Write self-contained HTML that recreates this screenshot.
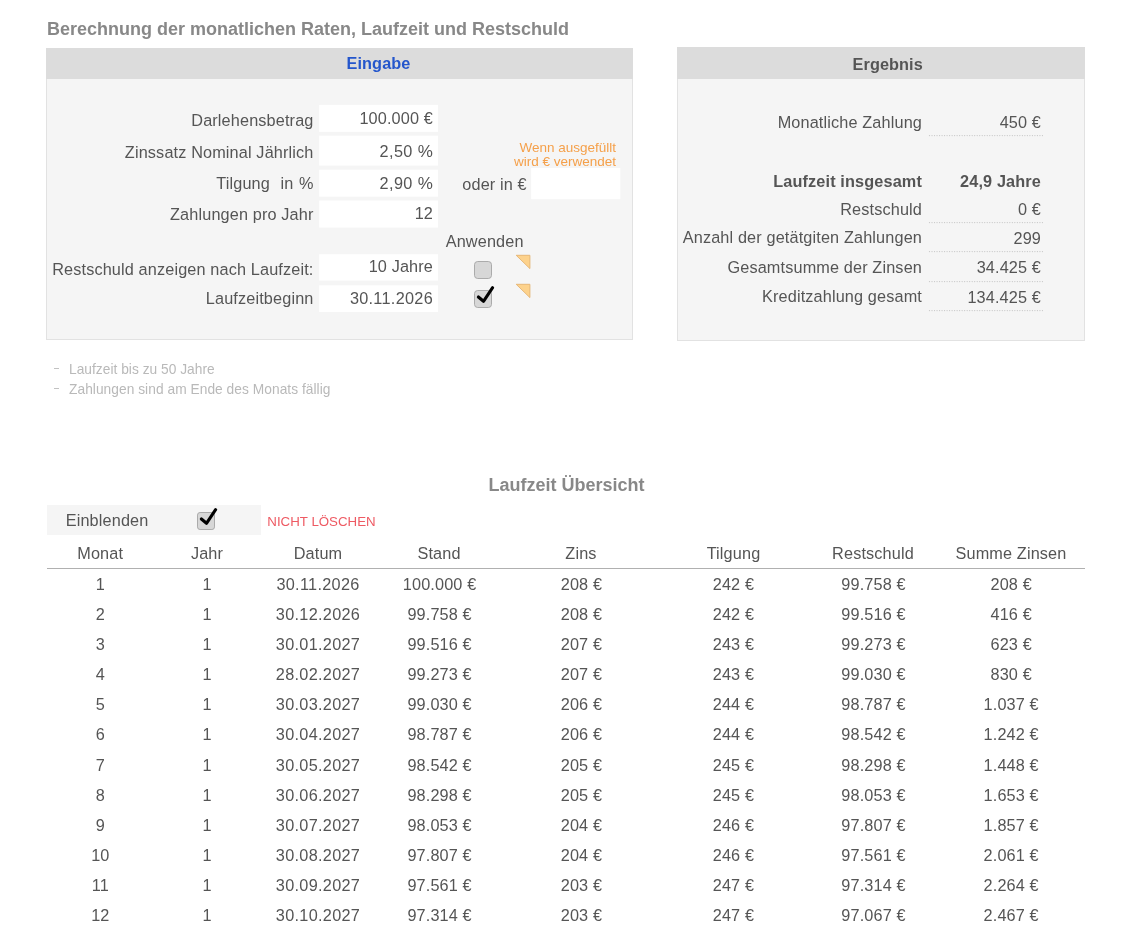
<!DOCTYPE html>
<html lang="de"><head><meta charset="utf-8"><title>Berechnung der monatlichen Raten</title>
<style>
html,body{margin:0;padding:0;background:#fff;}
body{width:1147px;height:934px;position:relative;overflow:hidden;font-family:"Liberation Sans",sans-serif;color:#555;font-size:16.25px;letter-spacing:0.14px;}
#wrap{position:absolute;left:0;top:0;width:1147px;height:934px;will-change:transform;}
.t{position:absolute;white-space:nowrap;line-height:20px;height:20px;}
.box{position:absolute;}
</style></head><body><div id="wrap">

<div class="t" style="top:19px;left:47px;font-size:18px;font-weight:bold;color:#888;letter-spacing:0px;">Berechnung der monatlichen Raten, Laufzeit und Restschuld</div>
<div class="box" style="left:46px;top:48px;width:587px;height:292px;background:#f5f5f5;box-sizing:border-box;border:1px solid #e2e2e2;"></div>
<div class="box" style="left:46px;top:48px;width:587px;height:31px;background:#dcdcdc;"></div>
<div class="t" style="top:53px;left:228.5px;width:300px;text-align:center;font-weight:bold;color:#2456cc;letter-spacing:0.1px;">Eingabe</div>
<svg class="box" style="left:300px;top:100px;" width="330" height="220" viewBox="300 100 330 220"><rect x="319.1" y="104.9" width="118.9" height="27.00" fill="#fff"/><rect x="319.1" y="135.65" width="118.9" height="29.95" fill="#fff"/><rect x="319.1" y="169.7" width="118.9" height="26.95" fill="#fff"/><rect x="319.1" y="200.5" width="118.9" height="27.10" fill="#fff"/><rect x="319.1" y="254.2" width="118.9" height="26.40" fill="#fff"/><rect x="319.1" y="285.3" width="118.9" height="26.70" fill="#fff"/><rect x="531.1" y="168" width="89.2" height="31.2" fill="#fff"/></svg>
<div class="t" style="top:110px;left:13.5px;width:300px;text-align:right;">Darlehensbetrag</div>
<div class="t" style="top:142px;left:13.5px;width:300px;text-align:right;">Zinssatz Nominal Jährlich</div>
<div class="t" style="top:173px;left:13.5px;width:300px;text-align:right;"><span style="word-spacing:0.7px">Tilgung&nbsp; in %</span></div>
<div class="t" style="top:204px;left:13.5px;width:300px;text-align:right;">Zahlungen pro Jahr</div>
<div class="t" style="top:259px;left:13.5px;width:300px;text-align:right;">Restschuld anzeigen nach Laufzeit:</div>
<div class="t" style="top:288px;left:13.5px;width:300px;text-align:right;">Laufzeitbeginn</div>
<div class="t" style="top:108px;left:133px;width:300px;text-align:right;">100.000 €</div>
<div class="t" style="top:141px;left:133px;width:300px;text-align:right;"><span style="letter-spacing:0.4px">2,50 </span><span style="font-size:17px">%</span></div>
<div class="t" style="top:173px;left:133px;width:300px;text-align:right;"><span style="letter-spacing:0.4px">2,90 </span><span style="font-size:17px">%</span></div>
<div class="t" style="top:203px;left:133px;width:300px;text-align:right;">12</div>
<div class="t" style="top:256px;left:133px;width:300px;text-align:right;">10 Jahre</div>
<div class="t" style="top:288px;left:133px;width:300px;text-align:right;"><span style="letter-spacing:0.3px">30.11.2026</span></div>
<div class="t" style="top:174px;left:462.3px;">oder in €</div>
<div class="t" style="top:231px;left:445.7px;">Anwenden</div>
<div class="t" style="left:466px;width:150px;text-align:right;top:140.5px;font-size:13.5px;line-height:14px;height:28px;color:#f5a04a;letter-spacing:0;">Wenn ausgefüllt<br>wird € verwendet</div>
<svg class="box" style="left:472.1px;top:255.10000000000002px;" width="26" height="28" viewBox="-2 -6 26 28"><rect x="0.5" y="0.5" width="17" height="17" rx="3.2" fill="#d7d7d7" stroke="#ababab"/></svg>
<svg class="box" style="left:472.1px;top:284px;" width="26" height="28" viewBox="-2 -6 26 28"><rect x="0.5" y="0.5" width="17" height="17" rx="3.2" fill="#d7d7d7" stroke="#ababab"/><path d="M4.4 6.95 L9.5 11.3 L18.6 -2.3" fill="none" stroke="#000" stroke-width="3.1" stroke-linecap="round" stroke-linejoin="round"/></svg>
<svg class="box" style="left:514px;top:253.2px;" width="18" height="18" viewBox="-2 -2 18 18"><path d="M0.2 0.3 L13.9 0.3 L13.9 13.6 Z" fill="#fdd28c" stroke="#e4b370" stroke-width="0.9"/></svg>
<svg class="box" style="left:514px;top:282.1px;" width="18" height="18" viewBox="-2 -2 18 18"><path d="M0.2 0.3 L13.9 0.3 L13.9 13.6 Z" fill="#fdd28c" stroke="#e4b370" stroke-width="0.9"/></svg>
<div class="box" style="left:53.5px;top:368px;width:5.4px;height:1.2px;background:#c2c2c2;"></div>
<div class="t" style="top:359px;line-height:21px;height:21px;left:69px;font-size:13.75px;color:#b9b9b9;letter-spacing:0.02px;">Laufzeit bis zu 50 Jahre</div>
<div class="box" style="left:53.5px;top:388px;width:5.4px;height:1.2px;background:#c2c2c2;"></div>
<div class="t" style="top:379px;line-height:21px;height:21px;left:69px;font-size:13.75px;color:#b9b9b9;letter-spacing:0.04px;">Zahlungen sind am Ende des Monats fällig</div>
<div class="box" style="left:677px;top:47px;width:408px;height:293.5px;background:#f5f5f5;box-sizing:border-box;border:1px solid #e2e2e2;"></div>
<div class="box" style="left:677px;top:47px;width:408px;height:32px;background:#dcdcdc;"></div>
<div class="t" style="top:54px;left:737.7px;width:300px;text-align:center;font-weight:bold;letter-spacing:0.1px;">Ergebnis</div>
<div class="t" style="top:112px;left:622px;width:300px;text-align:right;">Monatliche Zahlung</div>
<div class="t" style="top:112px;left:741px;width:300px;text-align:right;">450 €</div>
<svg class="box" style="left:928px;top:134px;" width="118" height="3"><line x1="1.5" y1="1.5" x2="116.5" y2="1.5" stroke="#c6c6c6" stroke-width="1.25" stroke-linecap="round" stroke-dasharray="0.01 2.5"/></svg>
<div class="t" style="top:171px;left:622px;width:300px;text-align:right;font-weight:bold;">Laufzeit insgesamt</div>
<div class="t" style="top:171px;left:741px;width:300px;text-align:right;font-weight:bold;">24,9 Jahre</div>
<div class="t" style="top:199px;left:622px;width:300px;text-align:right;">Restschuld</div>
<div class="t" style="top:199px;left:741px;width:300px;text-align:right;">0 €</div>
<svg class="box" style="left:928px;top:221px;" width="118" height="3"><line x1="1.5" y1="1.5" x2="116.5" y2="1.5" stroke="#c6c6c6" stroke-width="1.25" stroke-linecap="round" stroke-dasharray="0.01 2.5"/></svg>
<div class="t" style="top:227px;left:622px;width:300px;text-align:right;">Anzahl der getätgiten Zahlungen</div>
<div class="t" style="top:228px;left:741px;width:300px;text-align:right;">299</div>
<svg class="box" style="left:928px;top:250px;" width="118" height="3"><line x1="1.5" y1="1.5" x2="116.5" y2="1.5" stroke="#c6c6c6" stroke-width="1.25" stroke-linecap="round" stroke-dasharray="0.01 2.5"/></svg>
<div class="t" style="top:257px;left:622px;width:300px;text-align:right;">Gesamtsumme der Zinsen</div>
<div class="t" style="top:257px;left:741px;width:300px;text-align:right;">34.425 €</div>
<svg class="box" style="left:928px;top:280px;" width="118" height="3"><line x1="1.5" y1="1.5" x2="116.5" y2="1.5" stroke="#c6c6c6" stroke-width="1.25" stroke-linecap="round" stroke-dasharray="0.01 2.5"/></svg>
<div class="t" style="top:286px;left:622px;width:300px;text-align:right;">Kreditzahlung gesamt</div>
<div class="t" style="top:287px;left:741px;width:300px;text-align:right;">134.425 €</div>
<svg class="box" style="left:928px;top:309px;" width="118" height="3"><line x1="1.5" y1="1.5" x2="116.5" y2="1.5" stroke="#c6c6c6" stroke-width="1.25" stroke-linecap="round" stroke-dasharray="0.01 2.5"/></svg>
<div class="t" style="top:475px;left:416.5px;width:300px;text-align:center;font-size:18px;font-weight:bold;color:#888;letter-spacing:0px;">Laufzeit Übersicht</div>
<div class="box" style="left:47px;top:505px;width:214px;height:30px;background:#f5f5f5;"></div>
<div class="t" style="top:510px;left:65.7px;">Einblenden</div>
<svg class="box" style="left:195.1px;top:506px;" width="26" height="28" viewBox="-2 -6 26 28"><rect x="0.5" y="0.5" width="17" height="17" rx="2.6" fill="#d7d7d7" stroke="#ababab"/><path d="M4.4 6.95 L9.5 11.3 L18.6 -2.3" fill="none" stroke="#000" stroke-width="3.1" stroke-linecap="round" stroke-linejoin="round"/></svg>
<div class="t" style="top:511px;line-height:21px;height:21px;left:267.3px;font-size:13.3px;color:#ee5a63;letter-spacing:0px;">NICHT LÖSCHEN</div>
<div class="t" style="top:543px;left:-49.8px;width:300px;text-align:center;">Monat</div>
<div class="t" style="top:543px;left:57.0px;width:300px;text-align:center;">Jahr</div>
<div class="t" style="top:543px;left:168.0px;width:300px;text-align:center;">Datum</div>
<div class="t" style="top:543px;left:289.0px;width:300px;text-align:center;">Stand</div>
<div class="t" style="top:543px;left:431.0px;width:300px;text-align:center;">Zins</div>
<div class="t" style="top:543px;left:583.5px;width:300px;text-align:center;">Tilgung</div>
<div class="t" style="top:543px;left:723.0px;width:300px;text-align:center;">Restschuld</div>
<div class="t" style="top:543px;left:861.0px;width:300px;text-align:center;">Summe Zinsen</div>
<div class="box" style="left:47px;top:568px;width:1038px;height:1px;background:#b0b0b0;"></div>
<div class="t" style="top:574px;left:-49.7px;width:300px;text-align:center;">1</div>
<div class="t" style="top:574px;left:57.19999999999999px;width:300px;text-align:center;">1</div>
<div class="t" style="top:574px;left:168.0px;width:300px;text-align:center;"><span style="letter-spacing:0.3px">30.11.2026</span></div>
<div class="t" style="top:574px;left:289.6px;width:300px;text-align:center;">100.000 €</div>
<div class="t" style="top:574px;left:431.4px;width:300px;text-align:center;">208 €</div>
<div class="t" style="top:574px;left:583.4px;width:300px;text-align:center;">242 €</div>
<div class="t" style="top:574px;left:723.5px;width:300px;text-align:center;">99.758 €</div>
<div class="t" style="top:574px;left:861.2px;width:300px;text-align:center;">208 €</div>
<div class="t" style="top:604px;left:-49.7px;width:300px;text-align:center;">2</div>
<div class="t" style="top:604px;left:57.19999999999999px;width:300px;text-align:center;">1</div>
<div class="t" style="top:604px;left:168.0px;width:300px;text-align:center;"><span style="letter-spacing:0.3px">30.12.2026</span></div>
<div class="t" style="top:604px;left:289.6px;width:300px;text-align:center;">99.758 €</div>
<div class="t" style="top:604px;left:431.4px;width:300px;text-align:center;">208 €</div>
<div class="t" style="top:604px;left:583.4px;width:300px;text-align:center;">242 €</div>
<div class="t" style="top:604px;left:723.5px;width:300px;text-align:center;">99.516 €</div>
<div class="t" style="top:604px;left:861.2px;width:300px;text-align:center;">416 €</div>
<div class="t" style="top:634px;left:-49.7px;width:300px;text-align:center;">3</div>
<div class="t" style="top:634px;left:57.19999999999999px;width:300px;text-align:center;">1</div>
<div class="t" style="top:634px;left:168.0px;width:300px;text-align:center;"><span style="letter-spacing:0.3px">30.01.2027</span></div>
<div class="t" style="top:634px;left:289.6px;width:300px;text-align:center;">99.516 €</div>
<div class="t" style="top:634px;left:431.4px;width:300px;text-align:center;">207 €</div>
<div class="t" style="top:634px;left:583.4px;width:300px;text-align:center;">243 €</div>
<div class="t" style="top:634px;left:723.5px;width:300px;text-align:center;">99.273 €</div>
<div class="t" style="top:634px;left:861.2px;width:300px;text-align:center;">623 €</div>
<div class="t" style="top:664px;left:-49.7px;width:300px;text-align:center;">4</div>
<div class="t" style="top:664px;left:57.19999999999999px;width:300px;text-align:center;">1</div>
<div class="t" style="top:664px;left:168.0px;width:300px;text-align:center;"><span style="letter-spacing:0.3px">28.02.2027</span></div>
<div class="t" style="top:664px;left:289.6px;width:300px;text-align:center;">99.273 €</div>
<div class="t" style="top:664px;left:431.4px;width:300px;text-align:center;">207 €</div>
<div class="t" style="top:664px;left:583.4px;width:300px;text-align:center;">243 €</div>
<div class="t" style="top:664px;left:723.5px;width:300px;text-align:center;">99.030 €</div>
<div class="t" style="top:664px;left:861.2px;width:300px;text-align:center;">830 €</div>
<div class="t" style="top:694px;left:-49.7px;width:300px;text-align:center;">5</div>
<div class="t" style="top:694px;left:57.19999999999999px;width:300px;text-align:center;">1</div>
<div class="t" style="top:694px;left:168.0px;width:300px;text-align:center;"><span style="letter-spacing:0.3px">30.03.2027</span></div>
<div class="t" style="top:694px;left:289.6px;width:300px;text-align:center;">99.030 €</div>
<div class="t" style="top:694px;left:431.4px;width:300px;text-align:center;">206 €</div>
<div class="t" style="top:694px;left:583.4px;width:300px;text-align:center;">244 €</div>
<div class="t" style="top:694px;left:723.5px;width:300px;text-align:center;">98.787 €</div>
<div class="t" style="top:694px;left:861.2px;width:300px;text-align:center;">1.037 €</div>
<div class="t" style="top:724px;left:-49.7px;width:300px;text-align:center;">6</div>
<div class="t" style="top:724px;left:57.19999999999999px;width:300px;text-align:center;">1</div>
<div class="t" style="top:724px;left:168.0px;width:300px;text-align:center;"><span style="letter-spacing:0.3px">30.04.2027</span></div>
<div class="t" style="top:724px;left:289.6px;width:300px;text-align:center;">98.787 €</div>
<div class="t" style="top:724px;left:431.4px;width:300px;text-align:center;">206 €</div>
<div class="t" style="top:724px;left:583.4px;width:300px;text-align:center;">244 €</div>
<div class="t" style="top:724px;left:723.5px;width:300px;text-align:center;">98.542 €</div>
<div class="t" style="top:724px;left:861.2px;width:300px;text-align:center;">1.242 €</div>
<div class="t" style="top:755px;left:-49.7px;width:300px;text-align:center;">7</div>
<div class="t" style="top:755px;left:57.19999999999999px;width:300px;text-align:center;">1</div>
<div class="t" style="top:755px;left:168.0px;width:300px;text-align:center;"><span style="letter-spacing:0.3px">30.05.2027</span></div>
<div class="t" style="top:755px;left:289.6px;width:300px;text-align:center;">98.542 €</div>
<div class="t" style="top:755px;left:431.4px;width:300px;text-align:center;">205 €</div>
<div class="t" style="top:755px;left:583.4px;width:300px;text-align:center;">245 €</div>
<div class="t" style="top:755px;left:723.5px;width:300px;text-align:center;">98.298 €</div>
<div class="t" style="top:755px;left:861.2px;width:300px;text-align:center;">1.448 €</div>
<div class="t" style="top:785px;left:-49.7px;width:300px;text-align:center;">8</div>
<div class="t" style="top:785px;left:57.19999999999999px;width:300px;text-align:center;">1</div>
<div class="t" style="top:785px;left:168.0px;width:300px;text-align:center;"><span style="letter-spacing:0.3px">30.06.2027</span></div>
<div class="t" style="top:785px;left:289.6px;width:300px;text-align:center;">98.298 €</div>
<div class="t" style="top:785px;left:431.4px;width:300px;text-align:center;">205 €</div>
<div class="t" style="top:785px;left:583.4px;width:300px;text-align:center;">245 €</div>
<div class="t" style="top:785px;left:723.5px;width:300px;text-align:center;">98.053 €</div>
<div class="t" style="top:785px;left:861.2px;width:300px;text-align:center;">1.653 €</div>
<div class="t" style="top:815px;left:-49.7px;width:300px;text-align:center;">9</div>
<div class="t" style="top:815px;left:57.19999999999999px;width:300px;text-align:center;">1</div>
<div class="t" style="top:815px;left:168.0px;width:300px;text-align:center;"><span style="letter-spacing:0.3px">30.07.2027</span></div>
<div class="t" style="top:815px;left:289.6px;width:300px;text-align:center;">98.053 €</div>
<div class="t" style="top:815px;left:431.4px;width:300px;text-align:center;">204 €</div>
<div class="t" style="top:815px;left:583.4px;width:300px;text-align:center;">246 €</div>
<div class="t" style="top:815px;left:723.5px;width:300px;text-align:center;">97.807 €</div>
<div class="t" style="top:815px;left:861.2px;width:300px;text-align:center;">1.857 €</div>
<div class="t" style="top:845px;left:-49.7px;width:300px;text-align:center;">10</div>
<div class="t" style="top:845px;left:57.19999999999999px;width:300px;text-align:center;">1</div>
<div class="t" style="top:845px;left:168.0px;width:300px;text-align:center;"><span style="letter-spacing:0.3px">30.08.2027</span></div>
<div class="t" style="top:845px;left:289.6px;width:300px;text-align:center;">97.807 €</div>
<div class="t" style="top:845px;left:431.4px;width:300px;text-align:center;">204 €</div>
<div class="t" style="top:845px;left:583.4px;width:300px;text-align:center;">246 €</div>
<div class="t" style="top:845px;left:723.5px;width:300px;text-align:center;">97.561 €</div>
<div class="t" style="top:845px;left:861.2px;width:300px;text-align:center;">2.061 €</div>
<div class="t" style="top:875px;left:-49.7px;width:300px;text-align:center;">11</div>
<div class="t" style="top:875px;left:57.19999999999999px;width:300px;text-align:center;">1</div>
<div class="t" style="top:875px;left:168.0px;width:300px;text-align:center;"><span style="letter-spacing:0.3px">30.09.2027</span></div>
<div class="t" style="top:875px;left:289.6px;width:300px;text-align:center;">97.561 €</div>
<div class="t" style="top:875px;left:431.4px;width:300px;text-align:center;">203 €</div>
<div class="t" style="top:875px;left:583.4px;width:300px;text-align:center;">247 €</div>
<div class="t" style="top:875px;left:723.5px;width:300px;text-align:center;">97.314 €</div>
<div class="t" style="top:875px;left:861.2px;width:300px;text-align:center;">2.264 €</div>
<div class="t" style="top:905px;left:-49.7px;width:300px;text-align:center;">12</div>
<div class="t" style="top:905px;left:57.19999999999999px;width:300px;text-align:center;">1</div>
<div class="t" style="top:905px;left:168.0px;width:300px;text-align:center;"><span style="letter-spacing:0.3px">30.10.2027</span></div>
<div class="t" style="top:905px;left:289.6px;width:300px;text-align:center;">97.314 €</div>
<div class="t" style="top:905px;left:431.4px;width:300px;text-align:center;">203 €</div>
<div class="t" style="top:905px;left:583.4px;width:300px;text-align:center;">247 €</div>
<div class="t" style="top:905px;left:723.5px;width:300px;text-align:center;">97.067 €</div>
<div class="t" style="top:905px;left:861.2px;width:300px;text-align:center;">2.467 €</div>
</div></body></html>
